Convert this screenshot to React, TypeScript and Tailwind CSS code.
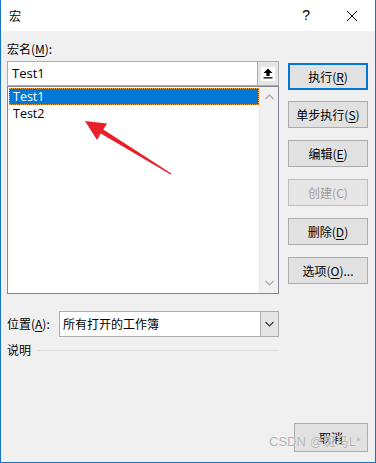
import React from "react";

const U = ({ c }: { c: string }) => <span className="underline underline-offset-2">{c}</span>;

function Btn({ children, primary, disabled, cls = "" }: { children: React.ReactNode; primary?: boolean; disabled?: boolean; cls?: string }) {
  return (
    <div
      className={
        "flex items-center justify-center bg-[#e1e1e1] " +
        (primary ? "border-2 border-[#0078d7] " : disabled ? "border border-[#bfbfbf] text-[#a0a0a0] bg-[#e6e6e6] " : "border border-[#adadad] ") +
        cls
      }
    >
      {children}
    </div>
  );
}

const Chev = ({ up, color = "#a6a6a6" }: { up?: boolean; color?: string }) => (
  <svg width="9" height="6" viewBox="0 0 9 6">
    <path d={up ? "M0.5 5 L4.5 1 L8.5 5" : "M0.5 1 L4.5 5 L8.5 1"} fill="none" stroke={color} strokeWidth="1.2" />
  </svg>
);

export default function App() {
  return (
    <div className="relative w-[376px] h-[463px] flex flex-col bg-[#f0f0f0] border-x border-b border-[#1a73c8] text-[12px] text-black font-['Microsoft_YaHei','Noto_Sans_CJK_SC',sans-serif] overflow-hidden">
      {/* title bar */}
      <div className="h-[31px] bg-white flex items-center shrink-0">
        <span className="ml-[8px]">宏</span>
        <div className="flex-1" />
        <span className="text-[14px] mr-[36px] font-['Liberation_Sans',sans-serif]">?</span>
        <svg width="12" height="12" viewBox="0 0 12 12" className="mr-[17px]">
          <path d="M1 1 L11 11 M11 1 L1 11" stroke="#000" strokeWidth="1" />
        </svg>
      </div>
      {/* body */}
      <div className="flex-1 flex pl-[6px] pr-[7px] pt-[8px] pb-[10px]">
        {/* left column */}
        <div className="w-[272px] flex flex-col">
          <div className="h-[20px] leading-[20px]">
            宏名(<U c="M" />):
          </div>
          <div className="mt-[2px] h-[25px] border border-[#adadad] bg-white flex items-center">
            <span className="ml-[4px] flex-1 text-[13px] leading-[17px] font-['Open_Sans',sans-serif]">Test1</span>
            <div className="w-[21px] h-[23px] bg-[#e5e5e5] border-l border-[#adadad] flex items-center justify-center">
              <div className="w-[14px] h-[14px] bg-white flex items-center justify-center">
                <svg width="10" height="11" viewBox="0 0 10 11">
                  <path d="M5 0.5 L9.5 5 L6.6 5 L6.6 8 L3.4 8 L3.4 5 L0.5 5 Z" fill="#000" />
                  <rect x="0.5" y="9.2" width="9" height="1.3" fill="#000" />
                </svg>
              </div>
            </div>
          </div>
          <div className="h-[208px] border border-[#828790] bg-white flex">
            <div className="flex-1 pt-[1px] pl-[1px] font-['Open_Sans',sans-serif] text-[12.5px]">
              <div className="h-[17px] leading-[15px] bg-[#0078d7] border border-dotted border-[#f39a3c] text-white flex items-center pl-[3px]">
                Test1
              </div>
              <div className="h-[17px] leading-[15px] flex items-center pl-[4px]">Test2</div>
            </div>
            <div className="w-[19px] bg-[#f0f0f0] border-l border-[#e6e6e6] flex flex-col items-center justify-between py-[7px]">
              <Chev up />
              <Chev />
            </div>
          </div>
          <div className="mt-[17px] flex items-center h-[26px]">
            <span className="w-[52px]">
              位置(<U c="A" />):
            </span>
            <div className="flex-1 h-[26px] border border-[#adadad] bg-white flex items-center">
              <span className="flex-1 pl-[3px]">所有打开的工作簿</span>
              <div className="w-[18px] h-[24px] bg-[#e5e5e5] border-l border-[#adadad] flex items-center justify-center">
                <Chev color="#333" />
              </div>
            </div>
          </div>
          <div className="mt-[5px] h-[16px] flex items-center">
            <span>说明</span>
            <div className="flex-1 ml-[6px] h-px bg-[#dcdcdc]" />
          </div>
        </div>
        {/* right column */}
        <div className="ml-[9px] w-[80px] flex flex-col pt-[24px]">
          <Btn primary cls="h-[27px]">
            执行(<U c="R" />)
          </Btn>
          <Btn cls="h-[27px] mt-[11px]">
            单步执行(<U c="S" />)
          </Btn>
          <Btn cls="h-[27px] mt-[12px]">
            编辑(<U c="E" />)
          </Btn>
          <Btn disabled cls="h-[27px] mt-[12px]">
            创建(C)
          </Btn>
          <Btn cls="h-[27px] mt-[12px]">
            删除(<U c="D" />)
          </Btn>
          <Btn cls="h-[27px] mt-[12px]">
            选项(<U c="O" />)...
          </Btn>
          <div className="flex-1" />
          <Btn cls="h-[29px] w-[74px] self-end">取消</Btn>
        </div>
      </div>
      {/* red arrow annotation */}
      <svg className="absolute left-0 top-0 pointer-events-none" width="376" height="463" viewBox="0 0 376 463">
        <polygon
          points="84,121 106,123.5 102.3,129.4 170.4,173.5 169.6,174.5 99.7,133.6 96,140"
          fill="#e8202a"
        />
      </svg>
      {/* watermark */}
      <div className="absolute left-[268px] top-[432px] text-[13px] text-[#b4b4b4] font-['Liberation_Sans','Noto_Sans_CJK_SC',sans-serif] [text-shadow:0_0_1px_#fff]">
        CSDN @斑马L*
      </div>
    </div>
  );
}
